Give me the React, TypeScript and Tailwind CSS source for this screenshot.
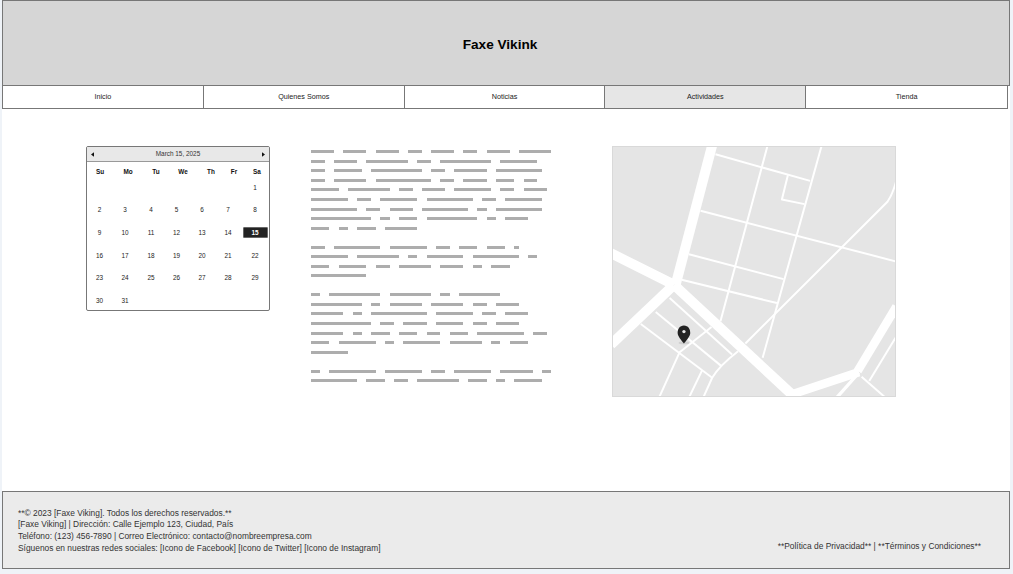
const NAV = ["Inicio", "Quienes Somos", "Noticias", "Actividades", "Tienda"];

const PARAS: number[][][] = [
  [
    [5, 5, 5, 3, 5, 3, 5, 7],
    [3, 5, 9, 3, 11, 8],
    [3, 6, 11, 3, 7, 10],
    [3, 7, 12, 3, 5, 4, 3],
    [6, 9, 3, 5, 8, 3, 5],
    [8, 3, 8, 10, 3, 8],
    [10, 3, 5, 10, 2, 10],
    [13, 2, 4, 11, 2, 5],
    [4, 2, 4, 7],
  ],
  [
    [3, 10, 8, 3, 4, 4, 1],
    [8, 9, 2, 8, 10, 2],
    [4, 6, 3, 7, 5, 2, 4],
    [12],
  ],
  [
    [2, 11, 9, 2, 9],
    [11, 2, 7, 7, 3, 5],
    [7, 2, 12, 8, 3, 5],
    [13, 3, 5, 6, 3, 5],
    [7, 2, 4, 4, 3, 4, 10, 3],
    [4, 8, 2, 8, 7, 2, 4],
    [8],
  ],
  [
    [2, 10, 8, 3, 8, 7, 2],
    [10, 4, 3, 9, 4, 2, 6],
  ],
];

const UNIT = 4.62;

const DAYS: (number | null)[] = [
  null, null, null, null, null, null, 1,
  2, 3, 4, 5, 6, 7, 8,
  9, 10, 11, 12, 13, 14, 15,
  16, 17, 18, 19, 20, 21, 22,
  23, 24, 25, 26, 27, 28, 29,
  30, 31, null, null, null, null, null,
];

function Calendar() {
  return (
    <div className="w-[184px] h-[165px] shrink-0 rounded-[2px] border border-[#777] bg-white overflow-hidden">
      <div className="h-[15px] bg-[#e8e8e8] border-b border-[#999] flex items-center justify-between px-[4px] text-[#111]">
        <svg width="3" height="5" viewBox="0 0 4 6"><path d="M4 0 L0 3 L4 6 Z" fill="#111" /></svg>
        <span className="text-[6.4px] text-[#333]">March 15, 2025</span>
        <svg width="3" height="5" viewBox="0 0 4 6"><path d="M0 0 L4 3 L0 6 Z" fill="#111" /></svg>
      </div>
      <div className="mt-[5px] grid grid-cols-[26px_30px_26px_28px_28px_18px_28px] h-[9px] items-center text-center text-[6.4px] font-bold text-[#111]">
        {["Su", "Mo", "Tu", "We", "Th", "Fr", "Sa"].map((d) => (
          <span key={d}>{d}</span>
        ))}
      </div>
      <div className="grid grid-cols-[25px_26px_26px_25px_26px_26px_28px] auto-rows-[22.7px] items-center text-center text-[6.4px] text-[#222]">
        {DAYS.map((d, i) => (
          <div key={i} className="flex justify-center">
            {d === 15 ? (
              <span className="w-[25px] h-[11px] leading-[9px] rounded-[1px] bg-[#222] border border-[#666] text-white font-bold">15</span>
            ) : (
              <span>{d}</span>
            )}
          </div>
        ))}
      </div>
    </div>
  );
}

function TextBlock() {
  return (
    <div className="w-[242px] shrink-0 pt-[1px] flex flex-col gap-[9.5px]">
      {PARAS.map((p, i) => (
        <div key={i} className="flex flex-col">
          {p.map((line, j) => (
            <div key={j} className="h-[9.55px] flex items-center gap-[9.25px]">
              {line.map((n, k) => (
                <span key={k} className="h-[3px] bg-[#adadad]" style={{ width: n * UNIT }} />
              ))}
            </div>
          ))}
        </div>
      ))}
    </div>
  );
}

function MapBox() {
  return (
    <div className="w-[284px] h-[251px] shrink-0 border border-[#d9d9d9] bg-[#e5e5e5] overflow-hidden">
      <svg viewBox="22 20 848 750" className="block w-full h-full" fill="none" stroke="#fff" strokeLinejoin="round">
        <g strokeWidth="30">
          <path d="M320 15 L210 435" />
          <path d="M15 340 L205 435" />
          <path d="M205 435 L565 770" />
          <path d="M200 440 L15 615" />
        </g>
        <g strokeWidth="26">
          <path d="M875 500 L758 695" />
          <path d="M762 698 L545 770" />
        </g>
        <g strokeWidth="6">
          <path d="M330 42 L615 122" />
          <path d="M487 15 L345 545" />
          <path d="M650 15 L472 655" />
          <path d="M548 105 L530 178 L598 192" />
          <path d="M285 212 L875 365" />
          <path d="M250 343 L535 418" />
          <path d="M228 420 L515 490" />
          <path d="M875 120 Q865 160 848 185 L420 612" />
          <path d="M192 475 L380 645" />
          <path d="M150 517 L348 680" />
          <path d="M105 553 L320 715" />
          <path d="M318 562 L222 638 L160 775" />
          <path d="M290 692 L250 775" />
          <path d="M398 635 Q340 680 320 715 L293 775" />
          <path d="M875 590 L793 725" />
          <path d="M770 712 L842 775" />
          <path d="M762 700 L695 775" strokeWidth="10" />
        </g>
        <ellipse cx="235" cy="610" rx="16" ry="4" fill="#cfcfcf" stroke="none" />
        <path
          d="M235 558 C222 558 216 569 216 580 C216 590 227 601 235 612 C243 601 254 590 254 580 C254 569 248 558 235 558 Z"
          fill="#222"
          stroke="none"
        />
        <circle cx="235" cy="576" r="5" fill="#e5e5e5" stroke="none" />
      </svg>
    </div>
  );
}

export default function App() {
  return (
    <div className="w-[1013px] h-[574px] bg-[#eff3f8] pl-[2px] pr-[3px] font-['Liberation_Sans',Arial,sans-serif] overflow-hidden">
      <div className="w-[1008px] h-[569px] bg-white flex flex-col">
        <header className="h-[86px] shrink-0 bg-[#d6d6d6] border border-[#777] flex items-center justify-center pt-[5px] pr-[12px]">
          <h1 className="text-[13.6px] font-bold text-black">Faxe Vikink</h1>
        </header>
        <nav className="h-[23px] w-[1006px] shrink-0 grid grid-cols-5 border-x border-b border-[#777]">
          {NAV.map((n, i) => (
            <div
              key={n}
              className={
                i === 3
                  ? "flex items-center justify-center text-[7.2px] text-[#222] bg-[#e6e6e6] border-r border-[#777]"
                  : i === 4
                    ? "flex items-center justify-center text-[7.2px] text-[#222]"
                    : "flex items-center justify-center text-[7.2px] text-[#222] border-r border-[#777]"
              }
            >
              {n}
            </div>
          ))}
        </nav>
        <main className="flex-1 flex items-start pl-[84px] pt-[37px]">
          <Calendar />
          <div className="ml-[41px]"><TextBlock /></div>
          <div className="ml-[59px]"><MapBox /></div>
        </main>
        <footer className="h-[78px] shrink-0 bg-[#ebebeb] border border-[#777] flex justify-between items-end pl-[15px] pr-[28px] pb-[13.5px] text-[8.38px] text-[#333]">
          <div className="leading-[11.7px]">
            <p>**© 2023 [Faxe Viking]. Todos los derechos reservados.**</p>
            <p>[Faxe Viking] | Dirección: Calle Ejemplo 123, Ciudad, País</p>
            <p>Teléfono: (123) 456-7890 | Correo Electrónico: contacto@nombreempresa.com</p>
            <p>Síguenos en nuestras redes sociales: [Icono de Facebook] [Icono de Twitter] [Icono de Instagram]</p>
          </div>
          <p className="leading-[11.7px] mb-[1.5px]">**Política de Privacidad** | **Términos y Condiciones**</p>
        </footer>
      </div>
    </div>
  );
}
